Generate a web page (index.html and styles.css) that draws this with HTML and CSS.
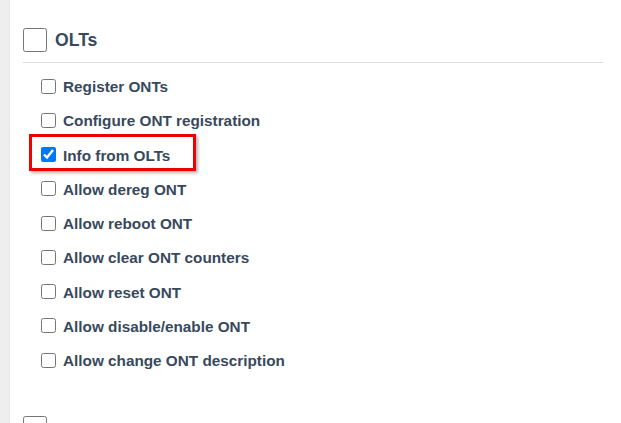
FILE: index.html
```html
<!DOCTYPE html>
<html>
<head>
<meta charset="utf-8">
<link rel="stylesheet" href="styles.css">
</head>
<body>
<div class="page">
  <aside class="stripe"></aside>
  <main class="main">
    <section class="group">
      <div class="group-head">
        <input type="checkbox" class="big-check">
        <span class="group-title">OLTs</span>
      </div>
      <ul class="perm-list">
        <li class="perm"><input type="checkbox" class="check"><span>Register ONTs</span></li>
        <li class="perm"><input type="checkbox" class="check"><span>Configure ONT registration</span></li>
        <li class="perm"><input type="checkbox" class="check" checked><span>Info from OLTs</span><div class="highlight"></div></li>
        <li class="perm"><input type="checkbox" class="check"><span>Allow dereg ONT</span></li>
        <li class="perm"><input type="checkbox" class="check"><span>Allow reboot ONT</span></li>
        <li class="perm"><input type="checkbox" class="check"><span>Allow clear ONT counters</span></li>
        <li class="perm"><input type="checkbox" class="check"><span>Allow reset ONT</span></li>
        <li class="perm"><input type="checkbox" class="check"><span>Allow disable/enable ONT</span></li>
        <li class="perm"><input type="checkbox" class="check"><span>Allow change ONT description</span></li>
      </ul>
    </section>
    <section class="group">
      <div class="group-head">
        <input type="checkbox" class="big-check">
      </div>
    </section>
  </main>
</div>
</body>
</html>
```
FILE: styles.css
```css
html, body {
  margin: 0;
  padding: 0;
  background: #ffffff;
  height: 100%;
  overflow: hidden;
}
body {
  font-family: "Liberation Sans", Arial, sans-serif;
  color: #38495d;
}
.page {
  display: flex;
  min-height: 100%;
}
.stripe {
  width: 9px;
  flex: none;
  background: #eeeeee;
  border-right: 1px solid #e3e3e3;
}
.main {
  flex: 1;
  padding: 28px 18px 0 13px;
}
.group {
  margin-bottom: 38px;
}
.group-head {
  display: flex;
  align-items: center;
  gap: 8px;
  padding-bottom: 10px;
  border-bottom: 1px solid #dcdcdc;
}
.big-check {
  width: 24px;
  height: 24px;
  margin: 0;
  flex: none;
}
.group-title {
  font-size: 17.6px;
  font-weight: bold;
  line-height: 20px;
}
.perm-list {
  list-style: none;
  margin: 0;
  padding: 7px 0 0 18px;
}
.perm {
  position: relative;
  display: flex;
  align-items: center;
  gap: 7px;
  height: 34.25px;
  font-size: 15.3px;
  font-weight: bold;
}
.check {
  width: 15px;
  height: 15px;
  margin: 0 0 2px 0;
  flex: none;
}
.highlight {
  position: absolute;
  left: -12px;
  top: -5px;
  width: 167px;
  height: 37px;
  box-sizing: border-box;
  border: 3px solid #ee0000;
  box-shadow: 2px 2px 3px rgba(0, 0, 0, 0.3);
  pointer-events: none;
}
```
